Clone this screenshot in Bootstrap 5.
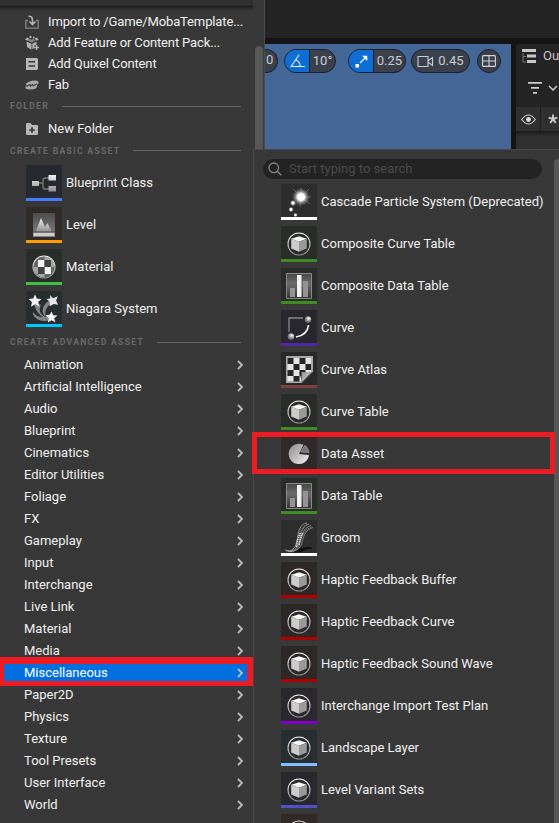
<!DOCTYPE html>
<html lang="en" data-bs-theme="dark">
<head>
<meta charset="utf-8">
<meta name="viewport" content="width=device-width, initial-scale=1">
<title>Content Browser</title>
<link href="https://cdn.jsdelivr.net/npm/bootstrap@5.3.0/dist/css/bootstrap.min.css" rel="stylesheet">
<style>
body{font:13px/20px Roboto,sans-serif;color:#f0f0f0;background:#151515;height:823px;overflow:hidden}
svg{display:block;flex:none}
.editor{height:149px}
.topstrip{height:38px;background:#242424}
.stage{height:105px;margin:6px 0 0 265px}
.viewport{width:246px;background:#456797;padding-top:5px}
.pill{height:24px;border:1px solid #19212d;border-radius:12px;background:#3b414c;color:#c9ccd0;overflow:hidden}
.pill-cut{width:13px;border-left:0;border-radius:0 12px 12px 0;padding-left:1px;margin-right:6px}
.pill-angle{width:52px}
.pill-scale{width:58px;margin-left:12px}
.pill-cam{width:59px;margin-left:5px;gap:4px}
.pill-grid{width:24px;margin-left:7px}
.pill-on{width:25px;background:#0d6fd6;border-right:1px solid #19212d;height:100%}
.outliner{width:43px;margin-left:5px;background:#242424;border-radius:4px 0 0 0;color:#c8c8c8}
.out-cols{height:24px;background:#303030;margin-top:7px}
.out-cols>div{height:24px}
.eye{width:25px;border-right:1px solid #1c1c1c}
.out-list{height:18px;background:linear-gradient(#1a1a1a 0,#262626 3px,#303030 6px)}
.menu{top:0;left:0;width:265px;height:823px;background:#383838;border-right:1px solid #4b4b4b}
.menu-body{width:253px}
.menu-top{height:11px;background:linear-gradient(#303030 0,#303030 5px,#1c1c1c 6px,#2b2b2b 8px,#383838 11px)}
.cmd{height:21px;padding-left:25px;gap:9px;letter-spacing:-.13px}
.cmd svg{color:#b2b2b2}
.cmd-folder{margin-top:1px;letter-spacing:0}
.sect{height:22px;padding:0 12px 0 10px;font-size:8.7px;font-weight:700;letter-spacing:1.25px;color:#696969;gap:13px}
.sect i{flex:1;height:1px;background:#686868}
.sect-basic{height:23px}
.sect-adv{height:24px}
.asset{height:42px;gap:4px}
.basic{padding-left:26px}
.tile{width:36px;height:36px;border-bottom:3px solid;background:#292929;overflow:hidden;flex:none}
.cat{height:22px;padding:0 10px 0 24px}
.cat svg{color:#b9b9b9}
.cat-on{background:linear-gradient(90deg,#383838 3px,#0070e0 3px,#0070e0 247px,#383838 247px);color:#fff}
.bar1{left:255px;top:46px;width:8px;height:110px;border-radius:4px;background:#575757}
.sub{left:253px;top:149px;width:306px;height:674px;background:#383838;border:1px solid #484848;border-width:1px 0 0 1px}
.find{height:20px;width:279px;margin:9px 0 2px 9px;border-radius:10px;background:#232323;color:#4b4b4b;padding-left:5px;gap:7px}
.sub .asset{padding-left:27px}
.bar2{left:300px;top:9px;width:9px;height:680px;border-radius:4px;background:#575757}
.ring1{left:-1px;top:657px;width:254px;height:29px;border:solid #ed1c24;border-width:7px 6px 5px 5px}
.ring2{left:252px;top:432px;width:303px;height:42px;border:5px solid #ed1c24}
.c-blue{border-color:#447cff;background:#272930}.c-orange{border-color:#ff9c00;background:#302a27}.c-lime{border-color:#40c040;background:#272d28}.c-cyan{border-color:#00c8ff;background:#272e30}
.c-white{border-color:#fff;background:#2d2d2d}.c-green{border-color:#3e8c23;background:#292c28}.c-violet{border-color:#4e28a5;background:#28272f}.c-rose{border-color:#804040}.c-brown{border-color:#c0392b;background:#302928}.c-red{border-color:#b00000;background:#2d2727}.c-purple{border-color:#8000c8;background:#2a272e}.c-sky{border-color:#80c0ff;background:#282d30}.c-indigo{border-color:#5050c8;background:#29282f}
</style>
<script src="https://cdn.jsdelivr.net/npm/bootstrap@5.3.0/dist/js/bootstrap.bundle.min.js"></script>
</head>
<body class="position-relative">
<svg width="0" height="0" class="position-absolute" aria-hidden="true">
<defs>
<linearGradient id="gv" x1="0" y1="0" x2="0" y2="1"><stop stop-color="#f4f4f4"/><stop offset="1" stop-color="#8c8c8c"/></linearGradient>
<linearGradient id="gd" x1="0" y1="0" x2="0" y2="1"><stop stop-color="#4c4c4c"/><stop offset="1" stop-color="#838383"/></linearGradient>
<linearGradient id="gk" x1="0" y1="0" x2="0" y2="1"><stop stop-color="#464646"/><stop offset=".4" stop-color="#6a6a6a"/><stop offset="1" stop-color="#333"/></linearGradient>
<linearGradient id="gp" x1="0" y1="0" x2="1" y2="1"><stop stop-color="#888"/><stop offset="1" stop-color="#f2f2f2"/></linearGradient>
<radialGradient id="gg"><stop stop-color="#fff"/><stop offset=".38" stop-color="#fff"/><stop offset=".65" stop-color="#aaa" stop-opacity=".65"/><stop offset="1" stop-color="#777" stop-opacity="0"/></radialGradient>
<radialGradient id="gb" cx=".6" cy=".35"><stop stop-color="#fff"/><stop offset="1" stop-color="#777"/></radialGradient>
<clipPath id="cm"><circle cx="18" cy="18" r="10.500"/></clipPath>
</defs>
<symbol id="cube" viewBox="0 0 36 33"><circle cx="18" cy="18" r="11" fill="none" stroke="url(#gv)" stroke-width="1.100"/><path d="M10.200 12.800 18 10.200l7.800 2.600L18 15.800z" fill="#f5f5f5"/><path d="m10.200 12.800 7.800 3v10l-7.800-3.300z" fill="#ccc"/><path d="m25.800 12.800-7.800 3v10l7.800-3.300z" fill="#999"/></symbol>
<symbol id="chart" viewBox="0 0 36 33"><path d="M5.500 5.500h25v25h-25z" fill="url(#gk)" stroke="#898989"/><path d="M9 20h5v9H9zM22 13h5v16h-5z" fill="#939393"/><path d="M16 7h4.500v22H16z" fill="#f0f0f0"/></symbol>
<symbol id="chev" viewBox="0 0 6 10"><path d="m1 1 4 4-4 4" fill="none" stroke="currentColor" stroke-width="1.900"/></symbol>
</svg>

<div class="editor">
 <div class="topstrip"></div>
 <div class="stage d-flex">
  <div class="viewport d-flex align-items-start">
   <div class="pill pill-cut">0</div>
   <div class="pill pill-angle d-flex align-items-center"><span class="pill-on d-flex align-items-center justify-content-center"><svg width="15" height="14" viewBox="0 0 15 14" fill="none" stroke="#eee" stroke-width="1.100"><path d="M9 .8 1.200 12.500H15M6 6q4 1.500 4 6M5 1.500"/></svg></span><span class="flex-fill text-center">10°</span></div>
   <div class="pill pill-scale d-flex align-items-center"><span class="pill-on d-flex align-items-center justify-content-center"><svg width="13" height="13" viewBox="0 0 13 13" fill="#fff"><path d="M.5 9h3.500v3.500H.5zM7 .8h5.300V6z"/><path d="m5 8 5-5" stroke="#fff" stroke-width="1.300"/></svg></span><span class="flex-fill text-center">0.25</span></div>
   <div class="pill pill-cam d-flex align-items-center justify-content-center"><svg width="17" height="13" viewBox="0 0 17 13" fill="none" stroke="#c9ccd0" stroke-width="1.100"><path d="M1 1.500h10v10H1zM11.500 5.500l4-3v8l-4-3"/></svg><span>0.45</span></div>
   <div class="pill pill-grid d-flex align-items-center justify-content-center"><svg width="14" height="12" viewBox="0 0 14 12" fill="none" stroke="#d4d6d9" stroke-width="1.100"><rect x=".6" y=".6" width="12.800" height="10.800" rx="1"/><path d="M7 .6v11M.6 6h13"/></svg></div>
  </div>
  <div class="outliner flex-shrink-0 overflow-hidden">
   <div class="d-flex align-items-center" style="height:23px;padding-left:6px;gap:7px"><svg width="14" height="14" viewBox="0 0 14 14"><path d="M0 0h14v3H0zM5 5.500h9v3H5zM5 11h9v3H5z" fill="#c8c8c8"/><path d="M1 4v9M1 7.500h3M1 13h3" stroke="#777" fill="none"/></svg><span>Outliner</span></div>
   <div class="d-flex align-items-center" style="height:33px;padding:9px 0 0 12px;gap:6px"><svg width="14" height="12" viewBox="0 0 14 12"><path d="M0 0h14v1.800H0zM3 5h8v1.800H3zM5 10h4v1.800H5z" fill="#ccc"/></svg><svg width="10" height="7" viewBox="0 0 10 7"><path d="m1 1 4 4 4-4" fill="none" stroke="#ccc" stroke-width="1.500"/></svg></div>
   <div class="out-cols d-flex"><div class="eye d-flex align-items-center justify-content-center"><svg width="15" height="11" viewBox="0 0 15 11"><path d="M.7 5.500Q7.500-3.500 14.300 5.500 7.500 14.500.7 5.500z" fill="none" stroke="#c8c8c8" stroke-width="1.100"/><circle cx="7.500" cy="5.500" r="2.400" fill="#ddd"/></svg></div><div class="d-flex align-items-center" style="padding-left:7px"><svg width="10" height="10" viewBox="0 0 10 10" stroke="#c8c8c8" stroke-width="1.900"><path d="M5 5V.5M5 5 .7 3.600M5 5l4.300-1.400M5 5 2.300 8.900M5 5l2.700 3.900"/></svg></div></div>
   <div class="out-list"></div>
  </div>
 </div>
</div>

<div class="menu position-absolute">
 <div class="menu-body">
  <div class="menu-top"></div>
  <div class="cmd d-flex align-items-center"><svg width="14" height="14" viewBox="0 0 14 14" fill="none" stroke="currentColor"><path d="M3 5.500H.8v7.700h12.400V5.500H11" stroke="#858585" stroke-width="1.300"/><path d="M3.500 1.300Q7.500 1 7.500 5v4M4.500 6.500l3 3 3-3" stroke-width="1.600"/></svg><span class="text-nowrap">Import to /Game/MobaTemplate...</span></div>
  <div class="cmd d-flex align-items-center"><svg width="14" height="14" viewBox="0 0 14 14" fill="currentColor"><path d="m1.500 5.500 5 2.200v6L2 11zM7.300 7.700l4.200-2.200v3L9 10v2l-1.700 1.500z"/><path d="m0 3.500 2-2 2 1-1 2.200zM10 2l2-.5 1.500 2.500-2.500.5zM4.500 0h2v2h-2zM8 .8h1.500v1.700H8z"/><path d="m2.500 4.500 4 2 4-2-2-2-2 1.500-1.500-1.500z" fill="#858585"/><path d="M11.500 9v5M9 11.500h5" stroke="currentColor" stroke-width="1.500"/></svg><span>Add Feature or Content Pack...</span></div>
  <div class="cmd d-flex align-items-center"><svg width="14" height="14" viewBox="0 0 14 14"><path d="M1 1h11l1 1v10l-1 1H1z" fill="#b8b8b8"/><path d="M3.500 4.800h6.500M3.500 9h6.500" stroke="#333" stroke-width="1.500"/></svg><span>Add Quixel Content</span></div>
  <div class="cmd d-flex align-items-center"><svg width="14" height="14" viewBox="0 0 14 14"><path d="M.5 6Q4 2.500 10 2.500q4 0 3.700 2.500L12 7q1 4.500-7 4.500-5 0-4.700-2.500L2 7z" fill="#aaa"/><path d="m1.500 8.500 3.500-2 .5 1.500 2-1.500 1 1.200 3.500-2" fill="none" stroke="#3c3c3c" stroke-width="1.100"/></svg><span>Fab</span></div>
  <div class="sect d-flex align-items-center"><span>FOLDER</span><i></i></div>
  <div class="cmd cmd-folder d-flex align-items-center"><svg width="14" height="14" viewBox="0 0 14 14"><path d="M1 2q0-1 1-1h3.500l1.500 2h5q1 0 1 1v8q0 1-1 1H2q-1 0-1-1z" fill="#b8b8b8"/><path d="M7 5.200v5.600M4.200 8h5.600" stroke="#333" stroke-width="1.600"/></svg><span>New Folder</span></div>
  <div class="sect sect-basic d-flex align-items-center"><span>CREATE BASIC ASSET</span><i></i></div>
  <div class="basic">
   <div class="asset d-flex align-items-center"><div class="tile c-blue"><svg width="36" height="33" viewBox="0 0 36 33"><path d="M12 18h5m6-5h-4q-2 0-2 2v7q0 2 2 2h4" fill="none" stroke="#777" stroke-width="1.300"/><path d="M6 16h7v5H6zM22.500 10H30v5.500h-7.500zM22.500 21H30v5.500h-7.500z" fill="url(#gv)"/></svg></div><span>Blueprint Class</span></div>
   <div class="asset d-flex align-items-center"><div class="tile c-orange"><svg width="36" height="33" viewBox="0 0 36 33"><path d="M7 6h22v24H7z" fill="url(#gd)"/><path d="M9.500 25 15 11l4 9 2.500-4 4.500 9z" fill="url(#gv)"/><path d="M7.500 25.500h21V29h-21z" fill="#ccc"/><path d="M7 25h22" stroke="#444"/></svg></div><span>Level</span></div>
   <div class="asset d-flex align-items-center"><div class="tile c-lime"><svg width="36" height="33" viewBox="0 0 36 33"><g clip-path="url(#cm)"><path d="M7 7h22v22H7z" fill="#666"/><path d="M12 11h6.500v7H12zM18.500 18H25v7h-6.500z" fill="#f3f3f3"/><path d="M7 18h5v7H7zM25 11h5v7h-5zM18.500 7H25v4h-6.500zM12 25h6.500v4H12z" fill="#a5a5a5"/><path d="M18.500 11H25v7h-6.500zM12 18h6.500v7H12z" fill="#434343"/></g><circle cx="18" cy="18" r="11" fill="none" stroke="url(#gv)" stroke-width="1.100"/></svg></div><span>Material</span></div>
   <div class="asset d-flex align-items-center"><div class="tile c-cyan"><svg width="36" height="33" viewBox="0 0 36 33"><path d="M9 14q2 8 9 12-7-4-4-12zM25 12q-8 5-6 13-5-9 5-15zM7 22q4 6 15 4v3Q11 31 7 22z" fill="#858585" stroke="#858585" stroke-width="1.200"/><path d="m9 3.500 2 4.200 4.500.2-3.400 3.200 1.400 4.400L9 13.200l-4 2.500 1-4.600L2.500 8l4.800-.5z" fill="#f2f2f2"/><path d="m24 4 3 3.200 4.800-2-1.700 4.400 2 4.200-4.400-.8-4 2.200v-4.400L20.500 8l3.800-.5z" fill="#e5e5e5"/><path d="m25.500 20.500 1.700 3.800 4.300.2-3.300 2.800 1.200 4-3.900-2-3.700 2.200.9-4.300-3.200-2.900 4.200-.5z" fill="#f5f5f5"/></svg></div><span>Niagara System</span></div>
  </div>
  <div class="sect sect-adv d-flex align-items-center"><span>CREATE ADVANCED ASSET</span><i></i></div>
  <div class="cat d-flex align-items-center justify-content-between">Animation<svg width="6" height="10"><use href="#chev"/></svg></div>
  <div class="cat d-flex align-items-center justify-content-between">Artificial Intelligence<svg width="6" height="10"><use href="#chev"/></svg></div>
  <div class="cat d-flex align-items-center justify-content-between">Audio<svg width="6" height="10"><use href="#chev"/></svg></div>
  <div class="cat d-flex align-items-center justify-content-between">Blueprint<svg width="6" height="10"><use href="#chev"/></svg></div>
  <div class="cat d-flex align-items-center justify-content-between">Cinematics<svg width="6" height="10"><use href="#chev"/></svg></div>
  <div class="cat d-flex align-items-center justify-content-between">Editor Utilities<svg width="6" height="10"><use href="#chev"/></svg></div>
  <div class="cat d-flex align-items-center justify-content-between">Foliage<svg width="6" height="10"><use href="#chev"/></svg></div>
  <div class="cat d-flex align-items-center justify-content-between">FX<svg width="6" height="10"><use href="#chev"/></svg></div>
  <div class="cat d-flex align-items-center justify-content-between">Gameplay<svg width="6" height="10"><use href="#chev"/></svg></div>
  <div class="cat d-flex align-items-center justify-content-between">Input<svg width="6" height="10"><use href="#chev"/></svg></div>
  <div class="cat d-flex align-items-center justify-content-between">Interchange<svg width="6" height="10"><use href="#chev"/></svg></div>
  <div class="cat d-flex align-items-center justify-content-between">Live Link<svg width="6" height="10"><use href="#chev"/></svg></div>
  <div class="cat d-flex align-items-center justify-content-between">Material<svg width="6" height="10"><use href="#chev"/></svg></div>
  <div class="cat d-flex align-items-center justify-content-between">Media<svg width="6" height="10"><use href="#chev"/></svg></div>
  <div class="cat cat-on d-flex align-items-center justify-content-between">Miscellaneous<svg width="6" height="10"><use href="#chev"/></svg></div>
  <div class="cat d-flex align-items-center justify-content-between">Paper2D<svg width="6" height="10"><use href="#chev"/></svg></div>
  <div class="cat d-flex align-items-center justify-content-between">Physics<svg width="6" height="10"><use href="#chev"/></svg></div>
  <div class="cat d-flex align-items-center justify-content-between">Texture<svg width="6" height="10"><use href="#chev"/></svg></div>
  <div class="cat d-flex align-items-center justify-content-between">Tool Presets<svg width="6" height="10"><use href="#chev"/></svg></div>
  <div class="cat d-flex align-items-center justify-content-between">User Interface<svg width="6" height="10"><use href="#chev"/></svg></div>
  <div class="cat d-flex align-items-center justify-content-between">World<svg width="6" height="10"><use href="#chev"/></svg></div>
 </div>
 <div class="bar1 position-absolute"></div>
</div>

<div class="sub position-absolute overflow-hidden">
 <div class="find d-flex align-items-center"><svg width="14" height="14" viewBox="0 0 14 14" fill="none" stroke="#858585" stroke-width="1.300"><circle cx="5.800" cy="5.800" r="4.800"/><path d="m9.300 9.300 4 4"/></svg><span>Start typing to search</span></div>
 <div class="asset d-flex align-items-center"><div class="tile c-white"><svg width="36" height="33" viewBox="0 0 36 33"><path d="m20 13 9 7M20 13l-8-8M20 13l8-8M20 13l-1 10M20 13h10M20 13V4" stroke="#777" stroke-width=".7"/><circle cx="20" cy="13" r="9" fill="url(#gg)"/><circle cx="12" cy="19" r="3.200" fill="url(#gg)"/><circle cx="10" cy="25.500" r="2.800" fill="url(#gg)"/><circle cx="14.500" cy="31" r="2.300" fill="url(#gg)"/></svg></div><span class="text-nowrap">Cascade Particle System (Deprecated)</span></div>
 <div class="asset d-flex align-items-center"><div class="tile c-green"><svg width="36" height="33"><use href="#cube"/></svg></div><span>Composite Curve Table</span></div>
 <div class="asset d-flex align-items-center"><div class="tile c-green"><svg width="36" height="33"><use href="#chart"/></svg></div><span>Composite Data Table</span></div>
 <div class="asset d-flex align-items-center"><div class="tile c-violet"><svg width="36" height="33" viewBox="0 0 36 33"><path d="M8 22V8h14" fill="none" stroke="#888" stroke-width="1.300"/><path d="M27.500 15q-1 10-12.500 12" fill="none" stroke="#f5f5f5" stroke-width="1.700"/><circle cx="27" cy="9.500" r="3.200" fill="url(#gb)"/><circle cx="10" cy="26.500" r="3.300" fill="url(#gb)"/></svg></div><span>Curve</span></div>
 <div class="asset d-flex align-items-center"><div class="tile c-rose"><svg width="36" height="33" viewBox="0 0 36 33"><path d="M5 4h27v16L21 31H5z" fill="#aaa"/><path d="M6.500 6H30v14l-9 9H6.500z" fill="#e4e4e4"/><path d="M6.500 6h6v6h-6zM18.500 6h6v6h-6zM12.500 12h6v6h-6zM24.500 12H30v6h-5.500zM6.500 18h6v6h-6zM18.500 18h6v6h-6zM12.500 24h6v5.500h-6z" fill="#252525"/><path d="M18.500 20H32L21 31z" fill="#252525"/><path d="M20.500 20H31L20.500 30.500z" fill="url(#gp)"/></svg></div><span>Curve Atlas</span></div>
 <div class="asset d-flex align-items-center"><div class="tile c-green"><svg width="36" height="33"><use href="#cube"/></svg></div><span>Curve Table</span></div>
 <div class="asset d-flex align-items-center"><div class="tile c-brown"><svg width="36" height="33" viewBox="0 0 36 33"><path d="M18 18 22.500 8.800A10.200 10.200 0 1 0 28 19z" fill="url(#gp)"/><path d="m19.800 16 4-6.700q3.700 2.500 4.200 7.200z" fill="#777" stroke="#999" stroke-width=".7"/></svg></div><span>Data Asset</span></div>
 <div class="asset d-flex align-items-center"><div class="tile c-green"><svg width="36" height="33"><use href="#chart"/></svg></div><span>Data Table</span></div>
 <div class="asset d-flex align-items-center"><div class="tile c-white"><svg width="36" height="33" viewBox="0 0 36 33" fill="none"><path d="M13 32q8-5 18-4-6 0-10 3z" fill="#111" stroke="#111" stroke-width="1.500"/><path d="M4 30q9 4 12-9c1-9 3-18 10-18" stroke="#aaa" stroke-width=".8"/><path d="M5 31q10 2 13-9c2-8 3-16 10-18M7 31.500q10 1 12-9c2-8 4-15 11-17M9 31.500q10 0 12-9c2-8 4-13 11-15" stroke="#bbb" stroke-width=".6"/><path d="M16 22q2-14 11-18M19 22q2-12 12-15" stroke="#777" stroke-width="1.400" stroke-dasharray="1 1"/><path d="M15.500 27q1-9 4-14M18 25q1-7 4-12" stroke="#ddd" stroke-width="1.500" stroke-dasharray="1.500 .7"/></svg></div><span>Groom</span></div>
 <div class="asset d-flex align-items-center"><div class="tile c-red"><svg width="36" height="33"><use href="#cube"/></svg></div><span>Haptic Feedback Buffer</span></div>
 <div class="asset d-flex align-items-center"><div class="tile c-red"><svg width="36" height="33"><use href="#cube"/></svg></div><span>Haptic Feedback Curve</span></div>
 <div class="asset d-flex align-items-center"><div class="tile c-red"><svg width="36" height="33"><use href="#cube"/></svg></div><span>Haptic Feedback Sound Wave</span></div>
 <div class="asset d-flex align-items-center"><div class="tile c-purple"><svg width="36" height="33"><use href="#cube"/></svg></div><span>Interchange Import Test Plan</span></div>
 <div class="asset d-flex align-items-center"><div class="tile c-sky"><svg width="36" height="33"><use href="#cube"/></svg></div><span>Landscape Layer</span></div>
 <div class="asset d-flex align-items-center"><div class="tile c-indigo"><svg width="36" height="33"><use href="#cube"/></svg></div><span>Level Variant Sets</span></div>
 <div class="asset d-flex align-items-center"><div class="tile c-brown"><svg width="36" height="33"><use href="#cube"/></svg></div></div>
 <div class="bar2 position-absolute"></div>
</div>
<div class="ring1 position-absolute"></div>
<div class="ring2 position-absolute"></div>
</body>
</html>
